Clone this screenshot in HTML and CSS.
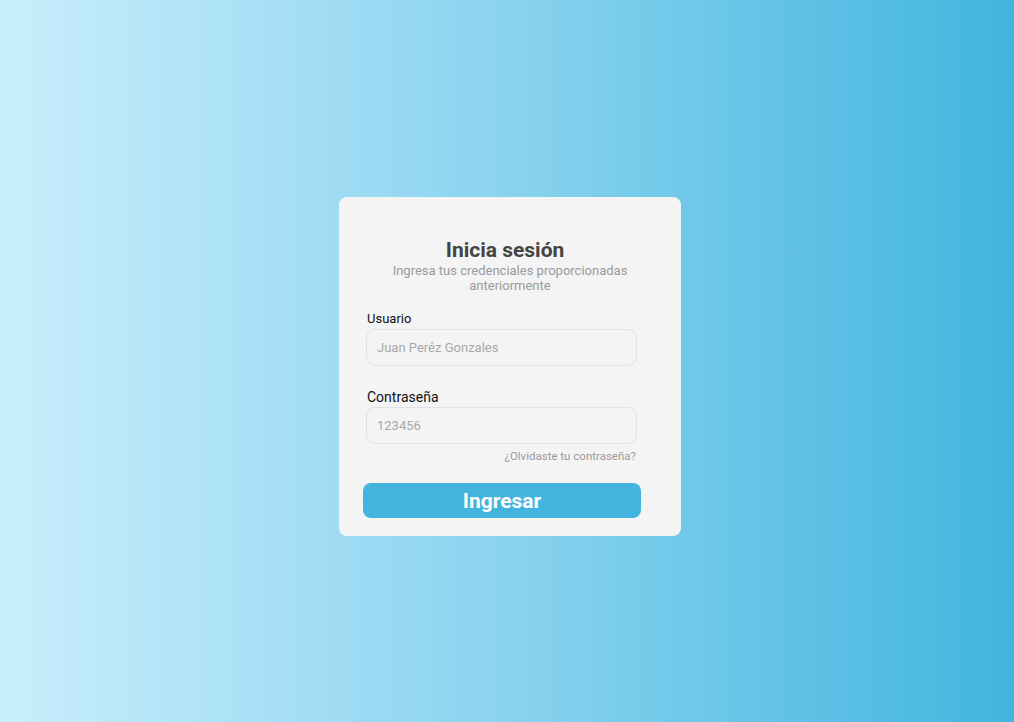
FILE: index.html
```html
<!DOCTYPE html>
<html lang="es">
<head>
<meta charset="utf-8">
<title>Inicia sesión</title>
<link rel="stylesheet" href="styles.css">
</head>
<body>
<main class="page">
  <form class="card">
    <header class="card-header">
      <h1 class="title">Inicia sesión</h1>
      <p class="subtitle">Ingresa tus credenciales proporcionadas anteriormente</p>
    </header>
    <div class="field">
      <label class="label" for="user">Usuario</label>
      <input class="input" id="user" type="text" placeholder="Juan Peréz Gonzales">
    </div>
    <div class="field field-pass">
      <label class="label label-lg" for="pass">Contraseña</label>
      <input class="input" id="pass" type="text" placeholder="123456">
      <a class="forgot" href="#">¿Olvidaste tu contraseña?</a>
    </div>
    <button class="submit" type="button">Ingresar</button>
  </form>
</main>
</body>
</html>
```

FILE: styles.css
```css
* { box-sizing: border-box; }
html, body { margin: 0; height: 100%; }
body {
  font-family: Roboto, "Noto Sans", sans-serif;
  background: linear-gradient(90deg, #c9eefc 0%, #8ad3ef 50%, #41b5de 100%);
}
.page {
  height: 722px;
  display: flex;
  align-items: flex-start;
  justify-content: center;
  padding-top: 197px;
}
.card {
  width: 342px;
  height: 339px;
  background: #f4f4f4;
  border-radius: 8px;
  padding: 40px 0 0 0;
  display: flex;
  flex-direction: column;
  margin-left: 6px;
}
.card-header {
  text-align: center;
  padding-left: 48px;
  padding-right: 48px;
}
.title {
  margin: 0;
  font-size: 21px;
  font-weight: 700;
  color: #444;
  line-height: 26px;
  padding-right: 10px;
}
.subtitle {
  margin: 0;
  font-size: 13px;
  color: #9a9a9a;
  line-height: 15px;
}
.field {
  display: flex;
  flex-direction: column;
  margin-left: 27px;
  width: 271px;
  margin-top: 18px;
}
.field-pass { margin-top: 23px; }
.label {
  font-size: 13px;
  color: #111;
  line-height: 16px;
  margin-bottom: 2px;
  padding-left: 1px;
}
.label-lg { font-size: 14px; }
.input {
  height: 37px;
  border: 1px solid #e2e2e2;
  border-radius: 9px;
  background: #f4f4f4;
  padding: 0 10px;
  font-family: inherit;
  font-size: 13px;
  color: #333;
  outline: none;
}
.input::placeholder { color: #a8a8a8; }
.forgot {
  align-self: flex-end;
  font-size: 11.5px;
  color: #9a9a9a;
  text-decoration: none;
  margin-top: 5px;
  margin-right: 1px;
  line-height: 14px;
}
.submit {
  margin: 20px 0 0 24px;
  width: 278px;
  height: 35px;
  border: none;
  border-radius: 8px;
  background: #42b4de;
  color: #fff;
  font-family: inherit;
  font-size: 21px;
  font-weight: 700;
  cursor: pointer;
}
```
